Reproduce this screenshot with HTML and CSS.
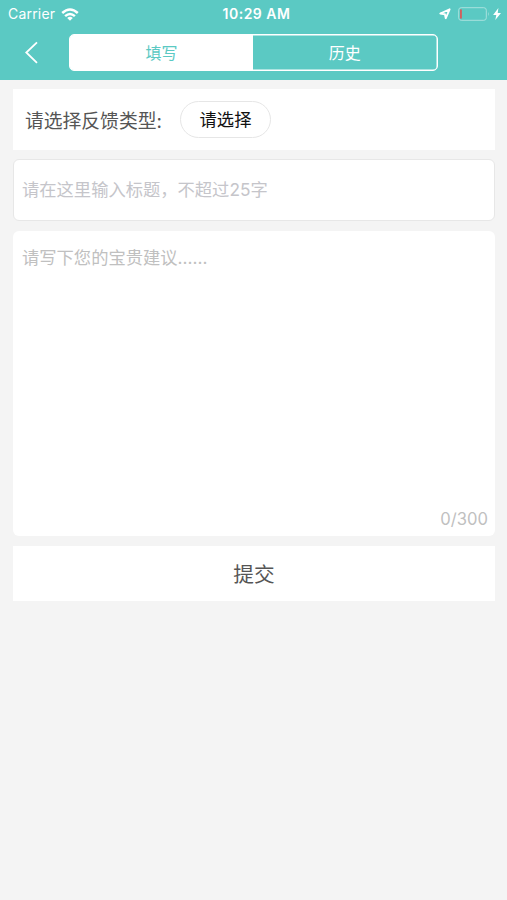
FILE: index.html
```html
<!DOCTYPE html>
<html lang="zh-CN">
<head>
<meta charset="utf-8">
<meta name="viewport" content="width=device-width, initial-scale=1">
<title>反馈</title>
<link rel="stylesheet" href="styles.css">
</head>
<body>
<header class="header">
  <div class="status">
    <div class="carrier">
      <span>Carrier</span>
      <svg class="wifi" width="18" height="13" viewBox="0 0 18 13" fill="none" stroke="#fff" stroke-width="2.500">
        <path d="M1.200 5Q9-2 16.800 5"/>
        <path d="M4.100 8.200Q9 3.700 13.900 8.200"/>
        <path d="M9 12.700L6.200 9.900Q9 7.700 11.800 9.900Z" fill="#fff" stroke="none"/>
      </svg>
    </div>
    <time class="time">10:29 AM</time>
    <div class="indicators">
      <svg width="12" height="12" viewBox="0 0 12 12" fill="none" stroke="#fff" stroke-width="1.900" stroke-linejoin="round"><path d="M1.300 5.500L10.600 1.300L6.800 10.200L5.900 6.200Z"/></svg>
      <svg class="battery" width="32" height="14" viewBox="0 0 32 14" fill="none"><rect x=".7" y=".7" width="27.600" height="12.600" rx="2.500" stroke="#a9e2de" stroke-width="1"/><rect x="2" y="2.300" width="1.900" height="9.400" rx=".8" fill="#d0605f"/><path d="M30 4.700Q31.500 7 30 9.300Z" fill="#a9e2de"/></svg>
      <svg class="bolt" width="8" height="12" viewBox="0 0 8 12" fill="#fff"><path d="M5.400 0L.1 6.900H3.300L2.300 12L8 5H4.700Z"/></svg>
    </div>
  </div>
  <nav class="nav">
    <svg class="back" width="14" height="24" viewBox="0 0 14 24" fill="none" stroke="#fff" stroke-width="1.800"><path d="M13 1.300L2.300 11.500L13 21.800"/></svg>
    <div class="tabs">
      <div class="tab active">填写</div>
      <div class="tab">历史</div>
    </div>
  </nav>
</header>
<main class="form">
  <section class="type-row">
    <span class="label">请选择反馈类型:</span>
    <div class="select">请选择</div>
  </section>
  <div class="title-field">请在这里输入标题，不超过25字</div>
  <div class="content-field">
    <span>请写下您的宝贵建议......</span>
    <span class="count">0/300</span>
  </div>
  <div class="submit">提交</div>
</main>
</body>
</html>
```
FILE: styles.css
```css
* {
  box-sizing: border-box;
}

body {
  margin: 0;
  min-height: 900px;
  background: #f4f4f4;
  font-family: Inter, "Noto Sans CJK SC", sans-serif;
  font-weight: 400;
}

svg {
  display: block;
  flex: none;
}

.header {
  height: 79.5px;
  background: #5bc9c3;
  color: #fff;
}

.status {
  display: grid;
  grid-template-columns: 1fr auto 1fr;
  align-items: center;
  height: 28px;
  padding: 0 6px 0 8px;
  font-size: 14px;
  line-height: 28px;
}

.carrier {
  display: flex;
  align-items: center;
  gap: 6px;
  letter-spacing: 0.2px;
}

.time {
  margin-left: 4px;
  font-weight: 600;
  letter-spacing: 0.5px;
}

.indicators {
  display: flex;
  align-items: center;
  justify-content: flex-end;
}

.battery {
  margin-left: 7px;
}

.bolt {
  margin-left: 3px;
}

.nav {
  display: flex;
  align-items: center;
  height: 37px;
  margin-top: 6px;
  padding-left: 24px;
}

.back {
  margin-right: 31px;
}

.tabs {
  display: flex;
  width: 368.5px;
  height: 37px;
  border: 1px solid #fff;
  border-radius: 5px;
  box-shadow: inset 0 0 0 0.5px #fff;
  overflow: hidden;
}

.tab {
  flex: 1;
  font-size: 16px;
  line-height: 36px;
  text-align: center;
}

.active {
  background: #fff;
  color: #5bc9c3;
}

.form {
  display: flex;
  flex-direction: column;
  padding: 9.5px 12px 0 13px;
}

.type-row {
  display: flex;
  align-items: center;
  height: 61px;
  padding-left: 12px;
  background: #fff;
}

.label {
  width: 155px;
  padding-bottom: 1px;
  color: #555;
  font-size: 18.8px;
  white-space: nowrap;
}

.select {
  width: 91px;
  height: 37px;
  border: 1px solid #e6e6e6;
  border-radius: 19px;
  color: #111;
  font-size: 17.3px;
  line-height: 35px;
  text-align: center;
}

.title-field {
  height: 62px;
  margin-top: 9px;
  padding-left: 8px;
  border: 1px solid #e7e7e7;
  border-radius: 6px;
  background: #fff;
  color: #c5c5ca;
  font-size: 17.3px;
  line-height: 60px;
}

.content-field {
  display: flex;
  flex-direction: column;
  justify-content: space-between;
  height: 305px;
  margin-top: 10px;
  padding: 14px 7px 4px 9px;
  border-radius: 6px;
  background: #fff;
  color: #c0c0c0;
  font-size: 17.3px;
  line-height: 26px;
}

.count {
  align-self: flex-end;
  font-size: 16.6px;
}

.submit {
  height: 55px;
  margin-top: 10px;
  background: #fff;
  color: #555;
  font-size: 20.7px;
  line-height: 57px;
  text-align: center;
}
```
